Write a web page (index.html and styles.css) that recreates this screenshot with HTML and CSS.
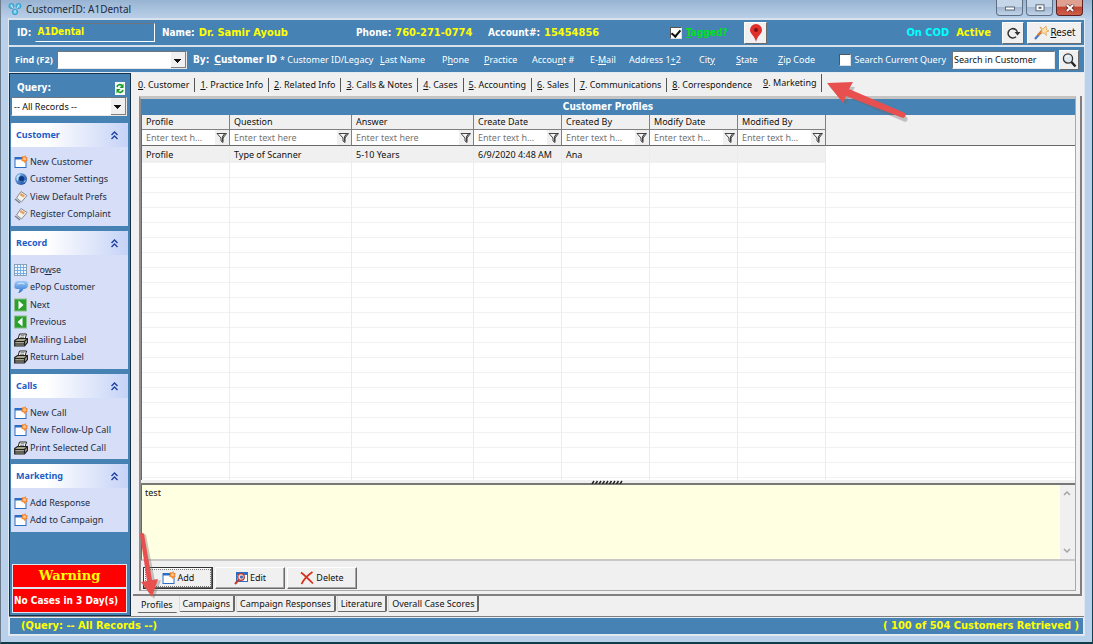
FILE: index.html
```html
<!DOCTYPE html>
<html lang="en">
<head>
<meta charset="utf-8">
<title>CustomerID: A1Dental</title>
<link rel="stylesheet" href="styles.css">
</head>
<body>
<svg class="defs" aria-hidden="true">
  <defs>
    <linearGradient id="g-globe" x1="0" y1="0" x2="1" y2="1"><stop offset="0" stop-color="#8fc1f0"/><stop offset="1" stop-color="#0b3f96"/></linearGradient>
    <linearGradient id="g-bubble" x1="0" y1="0" x2="0" y2="1"><stop offset="0" stop-color="#9ccaf8"/><stop offset="1" stop-color="#2f74d0"/></linearGradient>
    <symbol id="i-new" viewBox="0 0 14 14"><rect x="1" y="2.500" width="11" height="10" fill="#fff" stroke="#2b6fc4"/><path d="M1 3.500h8" stroke="#2b6fc4" stroke-width="2"/><path d="M8 1l2 .5L11.500 0l.5 2 2 .5-1 1.700.8 1.800-2 .2L10.500 8 9.300 6.200 7.200 6l.9-2z" fill="#f58a35"/><circle cx="10.500" cy="3.700" r="1.500" fill="#ffc48a"/></symbol>
    <symbol id="i-globe" viewBox="0 0 14 14"><circle cx="7" cy="7" r="6" fill="url(#g-globe)"/><circle cx="7.500" cy="6.500" r="2.600" fill="#0d3b86"/><path d="M2.500 5C3.500 3 5.500 2 7 2.300L4.500 5.500 4 9C2.500 8 2.200 6.500 2.500 5z" fill="#b9dbf7"/><path d="M9.500 11c1.500-.8 2.500-2 2.600-3.500L10 9z" fill="#8fc1f0"/></symbol>
    <symbol id="i-tag" viewBox="0 0 14 14"><path d="M7 1.500l6 4-5.500 6.500-5-4z" fill="#f4f1ea" stroke="#8b8b93"/><path d="M7 3l4 2.600-1.500 2L5.600 5z" fill="#e5a266"/><path d="M1 9l5 4" stroke="#77808f" stroke-width="1.500"/></symbol>
    <symbol id="i-grid" viewBox="0 0 14 14"><rect x=".5" y="1.500" width="12" height="11" fill="#eef6ff" stroke="#8a9fb8"/><path d="M1 4.500h11M1 7.500h11M1 10.500h11M3.500 2v10M6.500 2v10M9.500 2v10" stroke="#74b0e8"/></symbol>
    <symbol id="i-chat" viewBox="0 0 14 14"><path d="M4 1h6.500c2.500 0 3.500 1.500 3.500 3.800S12.500 9 10.500 9H9.500c-1 2-3 4-5.500 4 1-1 1.500-2.500 1.500-4H3C.8 9 0 7.500.4 5 .8 2.500 1.800 1 4 1z" fill="url(#g-bubble)"/><path d="M3.500 4c2-1 5-1 7 0" stroke="#d8eafd" fill="none"/></symbol>
    <symbol id="i-next" viewBox="0 0 14 14"><rect x=".5" y="1" width="12" height="12" fill="#2aa12c" stroke="#8bbf8b"/><path d="M4.500 2.500v9l5-4.500z" fill="#fff"/></symbol>
    <symbol id="i-prev" viewBox="0 0 14 14"><rect x=".5" y="1" width="12" height="12" fill="#2aa12c" stroke="#8bbf8b"/><path d="M8.500 2.500v9L3.500 7z" fill="#fff"/></symbol>
    <symbol id="i-print" viewBox="0 0 14 14"><path d="M4 6L5.500 1h7L11 6z" fill="#fff" stroke="#222"/><path d="M6.500 2.700h4M6 4.300h4" stroke="#444" stroke-width=".7"/><path d="M.7 7.500L3.500 5.500h10v4l-3 3.500H.7z" fill="#a9a78e" stroke="#222" stroke-width="1.200"/><path d="M1 8.500h9.500L13 6M1 11h9.500M10.500 8.500v4" stroke="#222" stroke-width="1.200" fill="none"/></symbol>
    <symbol id="i-chev" viewBox="0 0 9 9"><path d="M1.500 4L4.500 1l3 3M1.500 8l3-3 3 3" fill="none" stroke="#1d3f9c" stroke-width="1.400"/></symbol>
    <symbol id="i-filter" viewBox="0 0 12 12"><path d="M1 1.500h9.500L7 6v4.500L5 9V6z" fill="#f6f6f6" stroke="#444"/><path d="M8.500 2L6.500 5v4.500" stroke="#444" stroke-width="1.200" fill="none"/></symbol>
  </defs>
</svg>

<div class="window">
  <header class="titlebar">
    <svg class="app-icon" viewBox="0 0 14 14"><g fill="#55bde4" stroke="#2794c4" stroke-width=".7"><circle cx="3.500" cy="4" r="2.600"/><circle cx="10.500" cy="4" r="2.600"/><circle cx="7" cy="10" r="2.800"/></g><path d="M3 3l2 3M11 3L9 6M7 8v3" stroke="#d9f2fb"/></svg>
    <h1 class="app-title">CustomerID: A1Dental</h1>
    <div class="win-buttons">
      <button class="win-btn" aria-label="Minimize"><svg viewBox="0 0 12 8"><rect x="1.500" y="3" width="9" height="3" fill="#fff" stroke="#5b6777"/></svg></button>
      <button class="win-btn" aria-label="Maximize"><svg viewBox="0 0 12 8"><rect x="2" y=".8" width="8" height="6" fill="#fff" stroke="#5b6777"/><rect x="4.500" y="2.800" width="3" height="2" fill="#5b6777"/></svg></button>
      <button class="win-btn win-close" aria-label="Close"><svg viewBox="0 0 12 8"><path d="M2.500.8l7 6.400M9.500.8l-7 6.400" stroke="#5a2222" stroke-width="3.200"/><path d="M2.800 1l6.400 6M9.200 1l-6.400 6" stroke="#fff" stroke-width="2"/></svg></button>
    </div>
  </header>

  <div class="client">
    <section class="info-row">
      <div class="pair"><label for="cid">ID:</label><input id="cid" class="id-box" value="A1Dental"></div>
      <div class="pair"><span>Name:</span><span class="val">Dr. Samir Ayoub</span></div>
      <div class="pair"><span>Phone:</span><span class="val">760-271-0774</span></div>
      <div class="pair"><span>Account#:</span><span class="val">15454856</span></div>
      <label class="tagged"><input type="checkbox" class="check" checked><span><u>T</u>agged?</span></label>
      <button class="face-btn pin-btn" aria-label="Map"><svg viewBox="0 0 16 20"><path d="M8 1a6 6 0 0 1 6 6c0 4-5 6-6 12C7 13 2 11 2 7a6 6 0 0 1 6-6z" fill="#e0302b"/><circle cx="8" cy="7" r="2" fill="#7d1411"/></svg></button>
      <div class="flags"><span class="cod">On COD</span><span class="active-flag">Active</span></div>
      <div class="top-actions">
        <button class="face-btn redo-btn" aria-label="Refresh"><svg viewBox="0 0 16 16"><path d="M12.500 8A4.700 4.700 0 1 0 11 11.800" fill="none" stroke="#333" stroke-width="1.500"/><path d="M9.500 7h6l-3 3.500z" fill="#333"/></svg></button>
        <button class="face-btn reset-btn"><svg viewBox="0 0 16 16"><path d="M2 14l7-8" stroke="#4978c8" stroke-width="2.200"/><path d="M5 10l4-4" stroke="#e07a28" stroke-width="2.400"/><path d="M7 2l3 2 3-3 .5 3.500L16 6l-3 1 .5 3.500L11 8 8 8l1-2.500z" fill="#fbe3a6" stroke="#d89a4c" stroke-width=".7"/></svg><span><u>R</u>eset</span></button>
      </div>
    </section>

    <section class="find-row">
      <div class="find"><label for="find">Find (F2)</label><select id="find" class="combo"><option></option></select></div>
      <div class="by"><span>By:</span><a href="#" class="by-main"><u>C</u>ustomer ID</a></div>
      <a href="#">* Customer ID/Legacy</a>
      <a href="#"><u>L</u>ast Name</a>
      <a href="#">P<u>h</u>one</a>
      <a href="#"><u>P</u>ractice</a>
      <a href="#">Accou<u>n</u>t #</a>
      <a href="#">E-<u>M</u>ail</a>
      <a href="#">Address 1<u>+</u>2</a>
      <a href="#">Cit<u>y</u></a>
      <a href="#"><u>S</u>tate</a>
      <a href="#"><u>Z</u>ip Code</a>
      <div class="search">
        <label class="search-cur"><input type="checkbox" class="check"><span>Search Current Query</span></label>
        <input class="search-box" aria-label="Search" value="Search in Customer">
        <button class="face-btn search-btn" aria-label="Go"><svg viewBox="0 0 16 16"><circle cx="7" cy="6.500" r="4.600" fill="#dfe8ee" stroke="#333" stroke-width="1.300"/><path d="M5 5a3 3 0 0 1 3-1" stroke="#fff" fill="none"/><path d="M10.500 10l4 4.500" stroke="#222" stroke-width="2.400"/></svg></button>
      </div>
    </section>

    <div class="body">
      <aside class="sidebar">
        <div class="query-head"><label for="query">Query:</label><svg viewBox="0 0 10 13"><rect width="10" height="13" fill="#f4fbf4"/><path d="M2 5a3 3 0 0 1 5-1.500M8 8a3 3 0 0 1-5 1.500" stroke="#1b9a2b" stroke-width="1.600" fill="none"/><path d="M8.500 1.500V6H4.500zM1.500 11.500V7h4z" fill="#1b9a2b"/></svg></div>
        <select id="query" class="combo query-combo"><option>-- All Records --</option></select>

        <nav class="groups">
          <section class="group">
            <h2>Customer<svg><use href="#i-chev"/></svg></h2>
            <ul>
              <li><a href="#"><svg><use href="#i-new"/></svg>New Customer</a></li>
              <li><a href="#"><svg><use href="#i-globe"/></svg>Customer Settings</a></li>
              <li><a href="#"><svg><use href="#i-tag"/></svg>View Default Prefs</a></li>
              <li><a href="#"><svg><use href="#i-tag"/></svg>Register Complaint</a></li>
            </ul>
          </section>
          <section class="group">
            <h2>Record<svg><use href="#i-chev"/></svg></h2>
            <ul>
              <li><a href="#"><svg><use href="#i-grid"/></svg><span>Bro<u>w</u>se</span></a></li>
              <li><a href="#"><svg><use href="#i-chat"/></svg>ePop Customer</a></li>
              <li><a href="#"><svg><use href="#i-next"/></svg>Next</a></li>
              <li><a href="#"><svg><use href="#i-prev"/></svg>Previous</a></li>
              <li><a href="#"><svg><use href="#i-print"/></svg>Mailing Label</a></li>
              <li><a href="#"><svg><use href="#i-print"/></svg>Return Label</a></li>
            </ul>
          </section>
          <section class="group">
            <h2>Calls<svg><use href="#i-chev"/></svg></h2>
            <ul>
              <li><a href="#"><svg><use href="#i-new"/></svg>New Call</a></li>
              <li><a href="#"><svg><use href="#i-new"/></svg>New Follow-Up Call</a></li>
              <li><a href="#"><svg><use href="#i-print"/></svg>Print Selected Call</a></li>
            </ul>
          </section>
          <section class="group">
            <h2>Marketing<svg><use href="#i-chev"/></svg></h2>
            <ul>
              <li><a href="#"><svg><use href="#i-new"/></svg>Add Response</a></li>
              <li><a href="#"><svg><use href="#i-new"/></svg>Add to Campaign</a></li>
            </ul>
          </section>
        </nav>

        <div class="warning">
          <strong>Warning</strong>
          <p>No Cases in 3 Day(s)</p>
        </div>
      </aside>

      <main class="main">
        <nav class="tabs">
          <a href="#"><u>0</u>. Customer</a>
          <a href="#"><u>1</u>. Practice Info</a>
          <a href="#"><u>2</u>. Related Info</a>
          <a href="#"><u>3</u>. Calls &amp; Notes</a>
          <a href="#"><u>4</u>. Cases</a>
          <a href="#"><u>5</u>. Accounting</a>
          <a href="#"><u>6</u>. Sales</a>
          <a href="#"><u>7</u>. Communications</a>
          <a href="#" class="before-current"><u>8</u>. Correspondence</a>
          <a href="#" class="current"><u>9</u>. Marketing</a>
        </nav>

        <div class="page">
          <div class="panel">
            <h2 class="panel-title">Customer Profiles</h2>
            <div class="grid-wrap">
              <table class="grid">
                <colgroup><col class="c-n"><col class="c-w"><col class="c-w"><col class="c-n"><col class="c-n"><col class="c-n"><col class="c-n"><col></colgroup>
                <thead>
                  <tr class="heads"><th>Profile</th><th>Question</th><th>Answer</th><th>Create Date</th><th>Created By</th><th>Modify Date</th><th>Modified By</th><td></td></tr>
                  <tr class="filters">
                    <td><div class="filter"><input placeholder="Enter text here" aria-label="Filter Profile"><button aria-label="Filter"><svg><use href="#i-filter"/></svg></button></div></td>
                    <td><div class="filter"><input placeholder="Enter text here" aria-label="Filter Question"><button aria-label="Filter"><svg><use href="#i-filter"/></svg></button></div></td>
                    <td><div class="filter"><input placeholder="Enter text here" aria-label="Filter Answer"><button aria-label="Filter"><svg><use href="#i-filter"/></svg></button></div></td>
                    <td><div class="filter"><input placeholder="Enter text here" aria-label="Filter Create Date"><button aria-label="Filter"><svg><use href="#i-filter"/></svg></button></div></td>
                    <td><div class="filter"><input placeholder="Enter text here" aria-label="Filter Created By"><button aria-label="Filter"><svg><use href="#i-filter"/></svg></button></div></td>
                    <td><div class="filter"><input placeholder="Enter text here" aria-label="Filter Modify Date"><button aria-label="Filter"><svg><use href="#i-filter"/></svg></button></div></td>
                    <td><div class="filter"><input placeholder="Enter text here" aria-label="Filter Modified By"><button aria-label="Filter"><svg><use href="#i-filter"/></svg></button></div></td>
                    <td></td>
                  </tr>
                </thead>
                <tbody>
                  <tr class="row"><td>Profile</td><td>Type of Scanner</td><td>5-10 Years</td><td>6/9/2020 4:48 AM</td><td>Ana</td><td></td><td></td><td></td></tr>
                  <tr class="empty"><td></td><td></td><td></td><td></td><td></td><td></td><td></td><td></td></tr>
                </tbody>
              </table>
            </div>
            <div class="splitter"><svg viewBox="0 0 32 4"><path d="M1 4l2-3M4.500 4l2-3M8 4l2-3M11.500 4l2-3M15 4l2-3M18.500 4l2-3M22 4l2-3M25.500 4l2-3M29 4l2-3" stroke="#222" stroke-width="1.500"/></svg></div>
            <div class="note">
              <textarea aria-label="Note">test</textarea>
              <div class="scroll"><svg viewBox="0 0 8 6"><path d="M1 5l3-3 3 3" fill="none" stroke="#a3a3a3" stroke-width="1.500"/></svg><svg viewBox="0 0 8 6"><path d="M1 1l3 3 3-3" fill="none" stroke="#a3a3a3" stroke-width="1.500"/></svg></div>
            </div>
            <div class="actions">
              <button class="action default"><span><svg><use href="#i-new"/></svg>Add</span></button>
              <button class="action"><span><svg viewBox="0 0 14 14"><rect x="2.500" y="1.500" width="11" height="9" fill="#fff" stroke="#2b6fc4"/><path d="M2 3h12" stroke="#2b6fc4" stroke-width="2"/><circle cx="7" cy="6" r="3.300" fill="#f6d5d0" stroke="#c23a2e" stroke-width="1.300"/><circle cx="7.500" cy="6" r="1.600" fill="#3568b8"/><path d="M1 13l4-4.500" stroke="#c0392b" stroke-width="2"/></svg>Edit</span></button>
              <button class="action"><span><svg viewBox="0 0 14 14"><path d="M1 1.500c4 3 8 7 12 11M12.500 1C8 4 4 8 1.500 13" fill="none" stroke="#d8301c" stroke-width="1.700"/></svg>Delete</span></button>
            </div>
          </div>
        </div>

        <nav class="subtabs">
          <a href="#" class="current">Profiles</a>
          <a href="#">Campaigns</a>
          <a href="#">Campaign Responses</a>
          <a href="#">Literature</a>
          <a href="#">Overall Case Scores</a>
        </nav>
      </main>
    </div>

    <footer class="status"><span>(Query: -- All Records --)</span><span>( 100 of 504 Customers Retrieved )</span></footer>
  </div>

  <svg class="arrow arrow-top" viewBox="0 0 84 44"><path d="M1 5l26 1-4 7 56 23q2 4-2 5L21 17l-3 7z" fill="#666" opacity=".35" transform="translate(2 2)"/><path d="M1 4l26-1-4 7 56 24q2 4-2 5L20 17l-3 7z" fill="#e8504f"/></svg>
  <svg class="arrow arrow-bottom" viewBox="0 0 24 68"><path d="M2 2q3-2 4 0l9 46 6-1-7 19L3 50l6-1z" fill="#666" opacity=".35" transform="translate(2 1)"/><path d="M2 2q3-2 4 0l8 46 6-1-6 18L3 50l6-1z" fill="#e8504f"/></svg>
</div>
</body>
</html>
```
FILE: styles.css
```css
* { box-sizing: border-box; }

:root {
  --ui: "Noto Sans", "DejaVu Sans Condensed", sans-serif;
  --wide: "DejaVu Sans Condensed", "DejaVu Sans", sans-serif;
  --blue: #4682b4;
  --face: #f0f0f0;
  --edge: #808080;
}

html, body { height: 100%; }
body { margin: 0; font: 9px/14px var(--ui); color: #111; overflow: hidden; }
button, input, select, textarea { font: inherit; color: inherit; margin: 0; }
a { color: inherit; text-decoration: none; }
h1, h2, p, ul { margin: 0; padding: 0; font: inherit; }
ul { list-style: none; }
svg { display: block; flex: none; }
u { text-underline-offset: 1px; }
.defs { position: absolute; width: 0; height: 0; }

.window {
  position: relative;
  display: flex;
  flex-direction: column;
  height: 100vh;
  padding: 0 7px 6px;
  background: #b9d1ea;
  border-left: 1px solid #6d7c8c;
  border-right: 1px solid #14404c;
  border-bottom: 2px solid #0f3c48;
}

.titlebar {
  display: flex;
  align-items: center;
  height: 18px;
  margin: 0 -7px;
  padding: 0 9px 0 7px;
  gap: 4px;
  background: linear-gradient(#98b4d2, #b9cfe8);
}
.app-icon { width: 14px; height: 14px; }
.app-title { flex: 1; font: 10px/16px "Noto Sans", sans-serif; color: #1c2a3a; }
.win-buttons { display: flex; gap: 3px; align-self: flex-start; }
.win-btn {
  display: grid;
  place-items: center;
  width: 27px;
  height: 16px;
  padding: 0;
  border: 1px solid #5f7086;
  border-top: 0;
  border-radius: 0 0 4px 4px;
  background: linear-gradient(#c5d6e8 45%, #a2b8d0 50%, #bfd3e8);
}
.win-btn svg { width: 12px; height: 8px; }
.win-close { border-color: #5a2222; background: linear-gradient(#e0a090 40%, #bf4432 50%, #d0604a); }

.client { flex: 1; display: flex; flex-direction: column; min-height: 0; border: 1px solid #dfe7f0; border-top: 0; background: var(--face); }

.info-row, .find-row {
  display: grid;
  align-items: center;
  background: var(--blue);
  color: #fff;
  border-top: 2px solid #d7e2ec;
}
.info-row {
  grid-template-columns: 145px 194px 132px 182px 74px 22px 1fr auto;
  height: 27px;
  padding: 0 2px 0 8px;
  font: bold 10px/14px var(--wide);
}
.pair { display: flex; align-items: center; gap: 4px; }
.val { font-size: 11px; color: #ff0; }
.id-box {
  width: 120px;
  height: 19px;
  padding: 0 0 2px 1px;
  border: 1px solid;
  border-color: #6b7680 #fff #fff #6b7680;
  background: var(--blue);
  color: #ff0;
}
.check {
  appearance: none;
  display: grid;
  place-items: center;
  width: 12px;
  height: 12px;
  background: #fff;
  border: 1px solid;
  border-color: #555 #ddd #ddd #555;
}
.check:checked::before { content: ""; width: 4px; height: 7px; margin-bottom: 2px; border: solid #111; border-width: 0 2px 2px 0; rotate: 40deg; }
.tagged { display: flex; align-items: center; gap: 4px; color: #00e020; }
.face-btn {
  display: flex;
  align-items: center;
  justify-content: center;
  padding: 0;
  background: var(--face);
  color: #111;
  border: 1px solid;
  border-color: #fff #696969 #696969 #fff;
}
.pin-btn { width: 23px; height: 22px; }
.pin-btn svg { width: 16px; height: 20px; }
.flags { display: flex; gap: 7px; justify-content: flex-end; padding-right: 11px; font-size: 11px; }
.cod { color: #0ff; }
.active-flag { color: #ff0; }
.top-actions { display: flex; gap: 3px; }
.redo-btn { width: 22px; height: 22px; }
.redo-btn svg, .reset-btn svg { width: 16px; height: 16px; }
.reset-btn { width: 55px; height: 22px; gap: 1px; font-weight: normal; }

.find-row {
  grid-template-columns: 178px 87px 100px 62px 42px 48px 58px 39px 70px 37px 42px 1fr auto;
  height: 27px;
  padding: 0 5px 0 6px;
  white-space: nowrap;
}
.find, .by { display: flex; align-items: center; font-weight: bold; }
.find { gap: 4px; }
.by { gap: 5px; font: bold 10px/14px var(--wide); }
.combo {
  appearance: none;
  flex: 1;
  height: 18px;
  margin-right: 6px;
  padding: 0 18px 0 2px;
  border: 1px solid;
  border-color: #6b7680 #e8e8e8 #e8e8e8 #6b7680;
  border-radius: 0;
  color: #111;
  background:
    linear-gradient(to bottom right, #111 50%, #0000 50%) right 4px top 7px / 4px 4px no-repeat,
    linear-gradient(to bottom left, #111 50%, #0000 50%) right 8px top 7px / 4px 4px no-repeat,
    linear-gradient(#808080, #808080) right 0 bottom 0 / 15px 1px no-repeat,
    linear-gradient(#808080, #808080) right 0 top 0 / 1px 16px no-repeat,
    linear-gradient(var(--face), var(--face)) right 0 top 0 / 15px 16px no-repeat,
    #fff;
}
.search { display: flex; align-items: center; }
.search-cur { display: flex; align-items: center; gap: 3px; margin-right: 6px; }
.search-box { width: 103px; height: 18px; padding: 0 1px; color: #111; background: #fff; border: 1px solid; border-color: #6b7680 #e8e8e8 #e8e8e8 #6b7680; }
.search-btn { width: 20px; height: 20px; margin-left: 4px; }
.search-btn svg { width: 16px; height: 16px; }

.body { flex: 1; display: flex; min-height: 0; border-top: 1px solid #e4ebf2; border-bottom: 1px solid #808080; }

.sidebar {
  display: flex;
  flex-direction: column;
  width: 122px;
  padding: 3px 2px 2px 1px;
  background: var(--blue);
  border: 1px solid #16324a;
}
.query-head { display: flex; justify-content: space-between; align-items: center; height: 20px; padding: 2px 3px 0 6px; color: #fff; font: bold 10px/14px var(--wide); }
.query-head svg { width: 10px; height: 13px; }
.query-combo { flex: none; width: auto; height: 19px; margin: 0 1px 7px 0; }
.groups { display: grid; gap: 5px; }
.group { background: #d6dff7; }
.group h2 {
  display: flex;
  align-items: center;
  justify-content: space-between;
  height: 24px;
  padding: 0 9px 0 5px;
  border-radius: 3px 3px 0 0;
  background: linear-gradient(90deg, #fff 30%, #c6d3f7);
  color: #215dc6;
  font-weight: bold;
}
.group h2 svg { width: 9px; height: 9px; }
.group ul { padding: 6px 0 3px 3px; }
.group li { height: 17px; }
.group li:nth-child(even) { height: 18px; }
.group li a { display: flex; align-items: center; gap: 2px; height: 17px; white-space: nowrap; color: #222c44; }
.group li svg { width: 14px; height: 14px; }
.warning { margin: auto 1px 0; border: 1px solid #dde6ee; color: #fff; background: #f00; }
.warning strong { display: block; border-bottom: 2px solid #dde6ee; text-align: center; font: bold 13px/22px "DejaVu Serif", serif; color: #ff0; }
.warning p { padding-left: 1px; font: bold 10px/23px var(--wide); white-space: nowrap; }

.main { flex: 1; display: flex; flex-direction: column; min-width: 0; padding: 1px 2px 2px; background: var(--face); }
.tabs { display: flex; align-items: center; height: 22px; white-space: nowrap; }
.tabs a { padding: 0 5px 0 4px; margin-left: 1px; border-right: 1px solid #555; }
.tabs .before-current { border-right-color: #0000; }
.tabs .current { align-self: flex-start; height: 18px; padding-top: 2px; }

.page { flex: 1; display: flex; min-height: 0; padding: 0 4px 3px 6px; border-right: 2px solid var(--edge); border-bottom: 2px solid var(--edge); }
.panel { flex: 1; display: flex; flex-direction: column; min-width: 0; border: 1px solid #a9a9a9; border-width: 3px 1px 1px 2px; border-color: #c4c4c4 #a9a9a9 #a9a9a9 #8c8c8c; }
.panel-title { height: 16px; background: var(--blue); color: #fff; text-align: center; font: bold 10px/16px var(--wide); }
.grid-wrap { flex: 1; min-height: 0; background: #fff; border-left: 1px solid #696969; }
.grid { width: 100%; height: 100%; table-layout: fixed; border-collapse: separate; border-spacing: 0; }
.c-n { width: 88px; }
.c-w { width: 122px; }
.grid th, .grid td { padding: 0; text-align: left; font-weight: normal; white-space: nowrap; overflow: hidden; }
.grid thead th, .grid thead td { background: var(--face); border-right: 1px solid var(--edge); }
.grid thead td:last-child { border-right: 0; }
.heads { height: 15px; }
.grid .heads th { padding-left: 4px; border-bottom: 1px solid var(--edge); line-height: 14px; }
.filters { height: 16px; }
.grid .filters td { border-bottom: 1px solid #696969; }
.filter { display: flex; height: 15px; background: #fff; }
.filter input { flex: 1; min-width: 0; height: 15px; margin-right: 8px; padding: 0 0 0 4px; border: 0; background: #fff; text-overflow: ellipsis; }
.filter input::placeholder { color: #757575; opacity: 1; }
.filter button { display: grid; place-items: center; width: 14px; padding: 0; border: 0; background: var(--face); }
.filter svg { width: 12px; height: 12px; }
.row { height: 17px; }
.grid .row td { padding-left: 4px; background: #f0f0f0; border-right: 1px solid #ececec; }
.grid tbody td:last-child { background-color: #fff; border-right: 0; }
.grid .empty td { border-right: 1px solid #ececec; background: repeating-linear-gradient(#fff 0 14px, #f1f1f1 14px 15px); }
.grid .empty td:last-child { border-right: 0; }
.splitter { display: flex; justify-content: center; align-items: flex-start; height: 5px; background: var(--face); border-bottom: 2px solid #777; }
.splitter svg { width: 32px; height: 4px; margin-right: 2px; }
.note { display: flex; height: 76px; background: #ffffe1; border-left: 1px solid #696969; border-bottom: 2px solid #c8c8c8; }
.note textarea { flex: 1; padding: 1px 3px; border: 0; resize: none; background: #ffffe1; }
.scroll { display: flex; flex-direction: column; justify-content: space-between; width: 15px; padding: 5px 3px; background: var(--face); }
.scroll svg { width: 8px; height: 6px; }
.actions { display: flex; gap: 2px; height: 29px; padding: 6px 2px 1px; }
.action { width: 70px; height: 22px; padding: 1px; background: var(--face); border: 1px solid; border-color: #fff #696969 #696969 #fff; box-shadow: inset -1px -1px #a8a8a8; }
.action span { display: flex; align-items: center; justify-content: center; gap: 2px; height: 100%; }
.action svg { width: 14px; height: 14px; }
.action.default { border-color: #333; box-shadow: inset -1px -1px #696969, inset 1px 1px #fff; }
.action.default span { border: 1px dotted #777; }

.subtabs { display: flex; gap: 1px; height: 18px; padding-left: 4px; white-space: nowrap; }
.subtabs a { height: 16px; padding: 0 3px; border: 1px solid #696969; border-width: 0 2px 1px 1px; border-radius: 0 0 2px 2px; border-left-color: #ddd; line-height: 15px; }
.subtabs .current { height: 17px; padding-top: 1px; border-right-color: #0000; border-left-color: #0000; }

.status { display: flex; justify-content: space-between; align-items: center; height: 18px; padding: 0 4px 0 11px; border: 1px solid #e4ebf2; background: var(--blue); color: #ff0; font: bold 11px/14px var(--wide); }

.arrow { position: absolute; pointer-events: none; }
.arrow-top { left: 825px; top: 79px; width: 84px; height: 44px; }
.arrow-bottom { left: 137px; bottom: 42px; width: 24px; height: 68px; }
```
